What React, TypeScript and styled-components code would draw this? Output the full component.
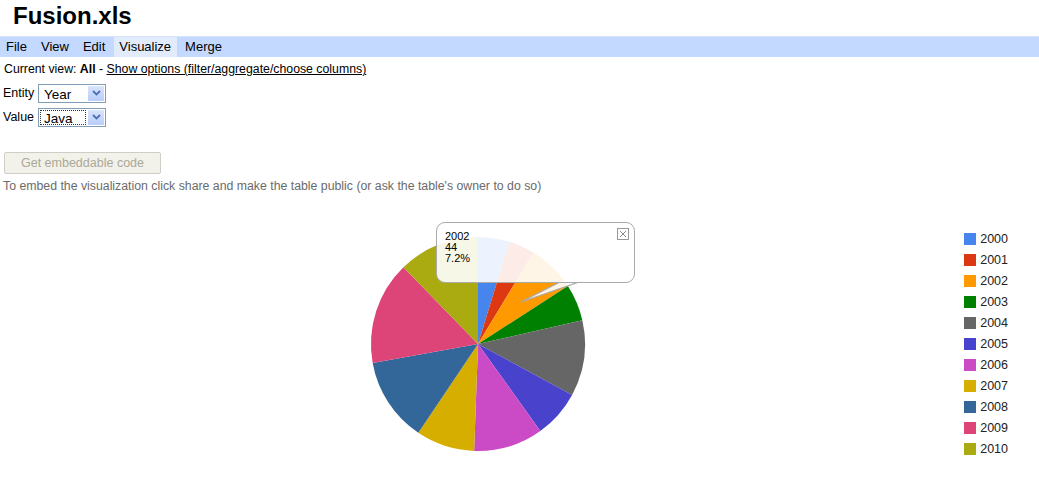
import * as React from 'react';
import styled, { createGlobalStyle } from 'styled-components';

const GlobalStyle = createGlobalStyle`
  html, body {
    margin: 0;
    padding: 0;
    background: #fff;
    font-family: "Liberation Sans", Arial, sans-serif;
    color: #000;
  }
`;

const Page = styled.div`
  width: 1039px;
  height: 481px;
  overflow: hidden;
  display: flex;
  flex-direction: column;
`;

const Title = styled.h1`
  margin: 0;
  height: 36px;
  padding: 3px 0 0 13px;
  box-sizing: border-box;
  font-size: 24px;
  font-weight: bold;
  line-height: 26px;
`;

const MenuBar = styled.div`
  height: 21px;
  background: #c3d9ff;
  border-top: 1px solid #d5e3fb;
  box-sizing: border-box;
  display: flex;
  align-items: stretch;
  padding-left: 1px;
`;

const MenuItem = styled.div<{ active?: boolean }>`
  padding: 0 6px 0 5px;
  margin-right: 3px;
  font-size: 13px;
  line-height: 20px;
  background: ${p => (p.active ? '#e1ebfb' : 'transparent')};
`;

const ViewLine = styled.div`
  padding: 5px 0 0 4px;
  height: 24px;
  font-size: 12.3px;
  line-height: 14px;
  box-sizing: border-box;
  & b { font-weight: bold; }
  & a { color: #000; text-decoration: underline; }
`;

const FieldRow = styled.div`
  display: flex;
  align-items: center;
  height: 24px;
  padding-left: 3px;
  font-size: 12.5px;
`;

const FieldLabel = styled.span`
  width: 35px;
`;

const SelectBox = styled.div`
  width: 68px;
  height: 19px;
  box-sizing: border-box;
  border: 1px solid #7f9db9;
  display: flex;
  align-items: stretch;
  background: #fff;
`;

const SelectText = styled.div<{ focused?: boolean }>`
  flex: 1;
  margin: 1px;
  padding-left: 3px;
  font-size: 13.5px;
  line-height: 15px;
  border: 1px ${p => (p.focused ? 'dotted #333' : 'solid transparent')};
`;

const SelectArrow = styled.div`
  width: 16px;
  margin: 1px;
  background: linear-gradient(#d9e5fd, #b8cdf8);
  border-radius: 1px;
  display: flex;
  align-items: center;
  justify-content: center;
`;

const EmbedButton = styled.button`
  margin: 23px 0 0 4px;
  width: 157px;
  height: 22px;
  padding: 0;
  background: #f2f1ea;
  border: 1px solid #cfcec6;
  border-radius: 2px;
  color: #aca899;
  font-family: "Liberation Sans", Arial, sans-serif;
  font-size: 12.5px;
  text-align: center;
  align-self: flex-start;
`;

const EmbedNote = styled.div`
  padding: 5px 0 0 3px;
  font-size: 12.3px;
  color: #6b6b6b;
  line-height: 14px;
`;

const ChartArea = styled.div`
  position: relative;
  flex: 1;
  display: flex;
  align-items: flex-start;
`;

const PieSvg = styled.svg`
  margin: 31px 0 0 358px;
  flex: none;
`;

const Legend = styled.ul`
  list-style: none;
  margin: 39px 0 0 auto;
  padding: 0 31px 0 0;
  display: flex;
  flex-direction: column;
  gap: 7px;
`;

const LegendItem = styled.li`
  display: flex;
  align-items: center;
  height: 14px;
  font-size: 12.5px;
  color: #222;
`;

const Swatch = styled.span<{ color: string }>`
  width: 12px;
  height: 12px;
  background: ${p => p.color};
  margin-right: 4px;
`;

const Bubble = styled.div`
  position: absolute;
  left: 436px;
  top: 29px;
  width: 199px;
  height: 61px;
  box-sizing: border-box;
  border: 1.5px solid #aaa;
  border-radius: 9px;
  background: rgba(255, 255, 255, 0.9);
  padding: 8px 0 0 8px;
  font-size: 11px;
  line-height: 11px;
  color: #000;
`;

const Tail = styled.svg`
  position: absolute;
  left: 518px;
  top: 88px;
`;

const CloseBox = styled.div`
  position: absolute;
  right: 5px;
  top: 5px;
  width: 12px;
  height: 12px;
  box-sizing: border-box;
  border: 1px solid #999;
  display: flex;
  align-items: center;
  justify-content: center;
`;

const slices = [
  { year: '2000', value: 29, color: '#4684ee' },
  { year: '2001', value: 24, color: '#dc3912' },
  { year: '2002', value: 44, color: '#ff9900' },
  { year: '2003', value: 34, color: '#008000' },
  { year: '2004', value: 70, color: '#666666' },
  { year: '2005', value: 44, color: '#4942cc' },
  { year: '2006', value: 64, color: '#cb4ac5' },
  { year: '2007', value: 54, color: '#d6ae00' },
  { year: '2008', value: 78, color: '#336699' },
  { year: '2009', value: 95, color: '#dd4477' },
  { year: '2010', value: 75, color: '#aaaa11' },
];

const Chevron = () => (
  <svg width="9" height="6" viewBox="0 0 9 6">
    <path d="M1 1 L4.5 4.5 L8 1" fill="none" stroke="#4d6fb8" strokeWidth="1.8" />
  </svg>
);

const Select: React.FC<{ value: string; focused?: boolean }> = ({ value, focused }) => (
  <SelectBox>
    <SelectText focused={focused}>{value}</SelectText>
    <SelectArrow><Chevron /></SelectArrow>
  </SelectBox>
);

const Pie: React.FC = () => {
  const cx = 120, cy = 120, r = 107;
  const total = slices.reduce((s, d) => s + d.value, 0);
  let acc = 0;
  return (
    <PieSvg width="240" height="240" viewBox="0 0 240 240">
      {slices.map(d => {
        const a0 = (acc / total) * Math.PI * 2;
        acc += d.value;
        const a1 = (acc / total) * Math.PI * 2;
        const x0 = cx + r * Math.sin(a0), y0 = cy - r * Math.cos(a0);
        const x1 = cx + r * Math.sin(a1), y1 = cy - r * Math.cos(a1);
        const large = a1 - a0 > Math.PI ? 1 : 0;
        return (
          <path
            key={d.year}
            d={`M${cx} ${cy} L${x0} ${y0} A${r} ${r} 0 ${large} 1 ${x1} ${y1} Z`}
            fill={d.color}
          />
        );
      })}
    </PieSvg>
  );
};

const App: React.FC = () => {
  const total = slices.reduce((s, d) => s + d.value, 0);
  const hovered = slices[2];
  return (
    <Page>
      <GlobalStyle />
      <Title>Fusion.xls</Title>
      <MenuBar>
        <MenuItem>File</MenuItem>
        <MenuItem>View</MenuItem>
        <MenuItem>Edit</MenuItem>
        <MenuItem active>Visualize</MenuItem>
        <MenuItem>Merge</MenuItem>
      </MenuBar>
      <ViewLine>
        Current view: <b>All</b> - <a>Show options (filter/aggregate/choose columns)</a>
      </ViewLine>
      <FieldRow>
        <FieldLabel>Entity</FieldLabel>
        <Select value="Year" />
      </FieldRow>
      <FieldRow>
        <FieldLabel>Value</FieldLabel>
        <Select value="Java" focused />
      </FieldRow>
      <EmbedButton disabled>Get embeddable code</EmbedButton>
      <EmbedNote>
        To embed the visualization click share and make the table public (or ask the table's owner to do so)
      </EmbedNote>
      <ChartArea>
        <Pie />
        <Legend>
          {slices.map(d => (
            <LegendItem key={d.year}>
              <Swatch color={d.color} />
              {d.year}
            </LegendItem>
          ))}
        </Legend>
        <Tail width="70" height="24" viewBox="0 0 70 24">
          <path d="M44 0 L3 21 L64 0" fill="rgba(255,255,255,0.9)" stroke="#aaa" strokeWidth="1.3" />
        </Tail>
        <Bubble>
          {hovered.year}
          <br />
          {hovered.value}
          <br />
          {((hovered.value / total) * 100).toFixed(1)}%
          <CloseBox>
            <svg width="8" height="8" viewBox="0 0 8 8">
              <path d="M1 1 L7 7 M7 1 L1 7" stroke="#888" strokeWidth="1" />
            </svg>
          </CloseBox>
        </Bubble>
      </ChartArea>
    </Page>
  );
};

export default App;
